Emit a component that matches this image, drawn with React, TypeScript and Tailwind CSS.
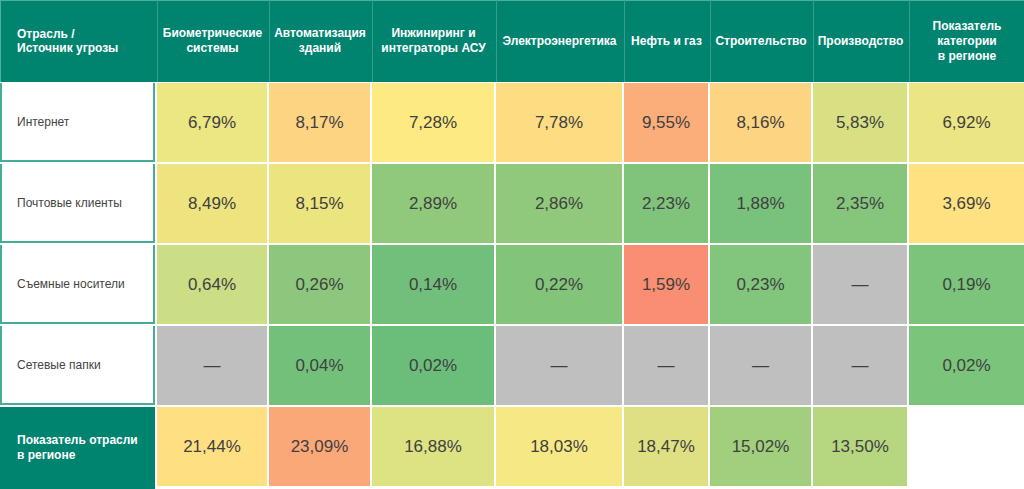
const cols = "grid grid-cols-[155px_110px_101px_122px_126px_84px_101px_94px_1fr] gap-x-[2px]";

const headers = [
  "Биометрические\nсистемы",
  "Автоматизация\nзданий",
  "Инжиниринг и\nинтеграторы АСУ",
  "Электроэнергетика",
  "Нефть и газ",
  "Строительство",
  "Производство",
  "Показатель\nкатегории\nв регионе",
];

type Cell = { v: string; bg: string };

const rows: { label: string; cells: Cell[] }[] = [
  {
    label: "Интернет",
    cells: [
      { v: "6,79%", bg: "bg-[#ece683]" },
      { v: "8,17%", bg: "bg-[#fdd482]" },
      { v: "7,28%", bg: "bg-[#fdea83]" },
      { v: "7,78%", bg: "bg-[#fddc82]" },
      { v: "9,55%", bg: "bg-[#fcae7a]" },
      { v: "8,16%", bg: "bg-[#fdd481]" },
      { v: "5,83%", bg: "bg-[#d8e083]" },
      { v: "6,92%", bg: "bg-[#ebe583]" },
    ],
  },
  {
    label: "Почтовые клиенты",
    cells: [
      { v: "8,49%", bg: "bg-[#ede480]" },
      { v: "8,15%", bg: "bg-[#ece47f]" },
      { v: "2,89%", bg: "bg-[#90c97c]" },
      { v: "2,86%", bg: "bg-[#90c97c]" },
      { v: "2,23%", bg: "bg-[#80c47b]" },
      { v: "1,88%", bg: "bg-[#79c27b]" },
      { v: "2,35%", bg: "bg-[#86c67c]" },
      { v: "3,69%", bg: "bg-[#fee282]" },
    ],
  },
  {
    label: "Съемные носители",
    cells: [
      { v: "0,64%", bg: "bg-[#cbdd85]" },
      { v: "0,26%", bg: "bg-[#8dc77d]" },
      { v: "0,14%", bg: "bg-[#72bf7b]" },
      { v: "0,22%", bg: "bg-[#83c47b]" },
      { v: "1,59%", bg: "bg-[#f98e73]" },
      { v: "0,23%", bg: "bg-[#82c57c]" },
      { v: "—", bg: "bg-[#bfbfbf]" },
      { v: "0,19%", bg: "bg-[#7cc47c]" },
    ],
  },
  {
    label: "Сетевые папки",
    cells: [
      { v: "—", bg: "bg-[#bfbfbf]" },
      { v: "0,04%", bg: "bg-[#73c07b]" },
      { v: "0,02%", bg: "bg-[#6bbe7a]" },
      { v: "—", bg: "bg-[#bfbfbf]" },
      { v: "—", bg: "bg-[#bfbfbf]" },
      { v: "—", bg: "bg-[#bfbfbf]" },
      { v: "—", bg: "bg-[#bfbfbf]" },
      { v: "0,02%", bg: "bg-[#7bc47c]" },
    ],
  },
];

const totals: Cell[] = [
  { v: "21,44%", bg: "bg-[#fee083]" },
  { v: "23,09%", bg: "bg-[#fba879]" },
  { v: "16,88%", bg: "bg-[#dde283]" },
  { v: "18,03%", bg: "bg-[#f6e885]" },
  { v: "18,47%", bg: "bg-[#dfe084]" },
  { v: "15,02%", bg: "bg-[#a2cf7e]" },
  { v: "13,50%", bg: "bg-[#b6d680]" },
  { v: "", bg: "bg-white" },
];

function Value({ cell }: { cell: Cell }) {
  return (
    <div
      className={`${cell.bg} flex items-center justify-center text-[17px] text-[#404040]`}
    >
      {cell.v}
    </div>
  );
}

export default function App() {
  return (
    <div
      className="w-[1024px] h-[489px] overflow-hidden bg-white"
      style={{ fontFamily: '"Liberation Sans", Arial, sans-serif' }}
    >
      {/* header */}
      <div className={`${cols} h-[82px] bg-[#008470] shadow-[inset_1px_1px_0_#4cb0a0]`}>
        <div className="flex items-center pl-[17px] text-[12px] font-bold leading-[14px] text-white">
          Отрасль /
          <br />
          Источник угрозы
        </div>
        {headers.map((h) => (
          <div
            key={h}
            className="flex items-center justify-center whitespace-pre-line border-l border-[#33a08c] text-center text-[12px] font-bold leading-[15px] text-white"
          >
            {h}
          </div>
        ))}
      </div>

      {/* body */}
      <div className={`${cols} mt-[1px] gap-y-[2px] auto-rows-[79px]`}>
        {rows.map((r) => (
          <div key={r.label} className="contents">
            <div className="flex items-center border-2 border-t-0 border-[#45ac98] bg-white pl-[15px] text-[12px] text-[#444]">
              {r.label}
            </div>
            {r.cells.map((c, i) => (
              <Value key={i} cell={c} />
            ))}
          </div>
        ))}
        <div className="flex h-[82px] items-center bg-[#008470] pl-[17px] text-[12px] font-bold leading-[15px] text-white">
          Показатель отрасли
          <br />
          в регионе
        </div>
        {totals.map((c, i) => (
          <Value key={i} cell={c} />
        ))}
      </div>
    </div>
  );
}
